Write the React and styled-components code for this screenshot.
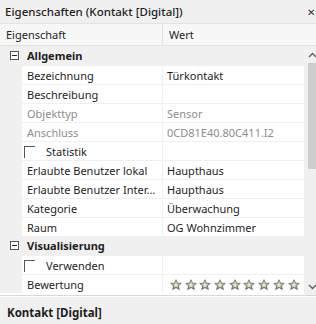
import styled, { createGlobalStyle } from "styled-components";

const GlobalStyle = createGlobalStyle`
  html, body {
    margin: 0;
    padding: 0;
    overflow: hidden;
    background: #f0f0f0;
  }
  body {
    font-family: "Noto Sans", "Open Sans", sans-serif;
    font-size: 11px;
    color: #1e1e1e;
  }
`;

const sections = [
  {
    name: "Allgemein",
    rows: [
      { label: "Bezeichnung", value: "Türkontakt" },
      { label: "Beschreibung", value: "" },
      { label: "Objekttyp", value: "Sensor", disabled: true },
      { label: "Anschluss", value: "0CD81E40.80C411.I2", disabled: true },
      { label: "Statistik", check: true },
      { label: "Erlaubte Benutzer lokal", value: "Haupthaus" },
      { label: "Erlaubte Benutzer Inter...", value: "Haupthaus" },
      { label: "Kategorie", value: "Überwachung" },
      { label: "Raum", value: "OG Wohnzimmer" },
    ],
  },
  {
    name: "Visualisierung",
    rows: [
      { label: "Verwenden", check: true },
      { label: "Bewertung", stars: 9 },
    ],
  },
];

function Star() {
  return (
    <svg width="12" height="12" viewBox="0 0 20 20">
      <defs>
        <linearGradient id="sg" x1="0" y1="0" x2="0" y2="1">
          <stop offset="0" stopColor="#e6e4d8" />
          <stop offset="0.5" stopColor="#b3b09c" />
          <stop offset="1" stopColor="#787560" />
        </linearGradient>
      </defs>
      <path
        d="M10 1.2 L12.6 7 L18.8 7.4 L14 11.4 L15.6 17.6 L10 14.2 L4.4 17.6 L6 11.4 L1.2 7.4 L7.4 7 Z"
        fill="url(#sg)"
        stroke="#6e6c5a"
        strokeWidth="1.4"
        strokeLinejoin="round"
      />
      <path
        d="M10 6 L11.2 9 L14.2 9.2 L12 11.2 L12.7 14.2 L10 12.6 L7.3 14.2 L8 11.2 L5.8 9.2 L8.8 9 Z"
        fill="#f4f3ec"
        opacity="0.85"
      />
    </svg>
  );
}

function ToggleIcon() {
  return (
    <svg width="9" height="9" viewBox="0 0 9 9">
      <rect x="0.5" y="0.5" width="8" height="8" fill="#fff" stroke="#555" />
      <path d="M2 4.5 H7" stroke="#222" />
    </svg>
  );
}

export default function App() {
  return (
    <>
      <GlobalStyle />
      <Panel>
        <TitleBar>
          <Title>Eigenschaften (Kontakt [Digital])</Title>
          <Close>✕</Close>
        </TitleBar>
        <Header>
          <HeadCell>Eigenschaft</HeadCell>
          <HeadCell $value>Wert</HeadCell>
        </Header>
        <GridArea>
          <Body>
            {sections.map((s) => (
              <div key={s.name}>
                <CategoryRow>
                  <Toggle>
                    <ToggleIcon />
                  </Toggle>
                  <CategoryName>{s.name}</CategoryName>
                </CategoryRow>
                {s.rows.map((r) => (
                  <Row key={r.label}>
                    <Gutter />
                    {r.check ? (
                      <CheckCell>
                        <CheckBox />
                        <span>{r.label}</span>
                      </CheckCell>
                    ) : (
                      <LabelCell $disabled={r.disabled}>{r.label}</LabelCell>
                    )}
                    <ValueCell $disabled={r.disabled}>
                      {r.stars ? (
                        <Stars>
                          {Array.from({ length: r.stars }).map((_, i) => (
                            <Star key={i} />
                          ))}
                        </Stars>
                      ) : (
                        r.value
                      )}
                    </ValueCell>
                  </Row>
                ))}
              </div>
            ))}
          </Body>
          <Scrollbar>
            <Arrow>
              <svg width="9" height="6" viewBox="0 0 9 6">
                <path d="M1 5 L4.5 1.5 L8 5" fill="none" stroke="#606060" strokeWidth="1.4" />
              </svg>
            </Arrow>
            <Track>
              <Thumb />
            </Track>
            <Arrow>
              <svg width="9" height="6" viewBox="0 0 9 6">
                <path d="M1 1 L4.5 4.5 L8 1" fill="none" stroke="#606060" strokeWidth="1.4" />
              </svg>
            </Arrow>
          </Scrollbar>
        </GridArea>
        <Description>
          <DescTitle>Kontakt [Digital]</DescTitle>
          <DescText>Wert, der wird: 0/1</DescText>
        </Description>
      </Panel>
    </>
  );
}

const Panel = styled.div`
  width: 321px;
  height: 324px;
  overflow: hidden;
  display: flex;
  flex-direction: column;
  background: #f0f0f0;
`;

const TitleBar = styled.div`
  height: 23px;
  display: flex;
  align-items: center;
  justify-content: space-between;
  padding: 0 6px 0 5px;
  flex-shrink: 0;
`;

const Title = styled.span`
  font-weight: 500;
  font-size: 11.5px;
  color: #1e1e1e;
`;

const Close = styled.span`
  font-size: 10px;
  color: #333;
`;

const Header = styled.div`
  height: 21px;
  display: flex;
  background: #f7f7f7;
  border-top: 1px solid #e3e3e3;
  border-bottom: 1px solid #e3e3e3;
  flex-shrink: 0;
`;

const HeadCell = styled.div`
  display: flex;
  align-items: center;
  width: ${(p) => (p.$value ? "auto" : "162px")};
  flex: ${(p) => (p.$value ? "1" : "none")};
  padding-left: ${(p) => (p.$value ? "6px" : "6px")};
  border-left: ${(p) => (p.$value ? "1px solid #e3e3e3" : "none")};
  box-sizing: border-box;
`;

const GridArea = styled.div`
  display: flex;
  height: 249px;
  flex-shrink: 0;
  border-bottom: 1px solid #d9d9d9;
`;

const Body = styled.div`
  flex: 1;
  min-width: 0;
  background: #fff;
  overflow: hidden;
`;

const CategoryRow = styled.div`
  height: 19px;
  display: flex;
  align-items: center;
  background: #f0f0f0;
`;

const Toggle = styled.div`
  width: 26px;
  display: flex;
  justify-content: center;
  padding-left: 1px;
`;

const CategoryName = styled.span`
  font-weight: 700;
`;

const Row = styled.div`
  height: 19px;
  display: flex;
  border-top: 1px solid #f0f0f0;
  box-sizing: border-box;
`;

const Gutter = styled.div`
  width: 22px;
  flex: none;
  background: #f0f0f0;
`;

const LabelCell = styled.div`
  width: 140px;
  flex: none;
  box-sizing: border-box;
  display: flex;
  align-items: center;
  padding-left: 5px;
  white-space: nowrap;
  overflow: hidden;
  color: ${(p) => (p.$disabled ? "#8d8d8d" : "#1e1e1e")};
`;

const CheckCell = styled.div`
  width: 140px;
  flex: none;
  box-sizing: border-box;
  display: flex;
  align-items: center;
  gap: 11px;
  padding-left: 2px;
`;

const CheckBox = styled.div`
  width: 10px;
  height: 11px;
  flex: none;
  border-top: 1px solid #555;
  border-left: 1px solid #555;
  margin-top: 1px;
`;

const ValueCell = styled.div`
  flex: 1;
  min-width: 0;
  display: flex;
  align-items: center;
  padding-left: 4px;
  border-left: 1px solid #f0f0f0;
  white-space: nowrap;
  overflow: hidden;
  color: ${(p) => (p.$disabled ? "#8d8d8d" : "#1e1e1e")};
`;

const Stars = styled.div`
  display: flex;
  gap: 2.7px;
  padding-left: 3px;
  padding-top: 2px;
`;

const Scrollbar = styled.div`
  width: 17px;
  flex: none;
  display: flex;
  flex-direction: column;
  background: #f0f0f0;
`;

const Arrow = styled.div`
  height: 17px;
  display: flex;
  align-items: center;
  justify-content: center;
`;

const Track = styled.div`
  flex: 1;
  display: flex;
  justify-content: center;
`;

const Thumb = styled.div`
  width: 9px;
  height: 106px;
  background: #cdcdcd;
`;

const Description = styled.div`
  padding: 7px 7px 0;
  border-top: 1px solid #fff;
`;

const DescTitle = styled.div`
  font-weight: 700;
  font-size: 11.5px;
  line-height: 17px;
`;

const DescText = styled.div`
  line-height: 17px;
`;
